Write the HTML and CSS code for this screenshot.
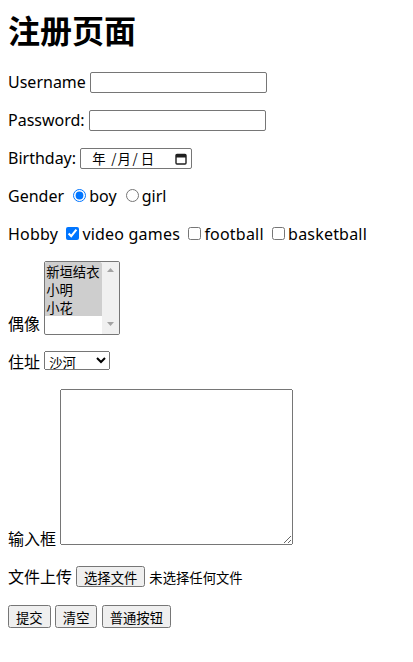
FILE: index.html
```html
<!DOCTYPE html>
<html lang="zh">
<head>
<meta charset="utf-8">
<title>注册页面</title>
<link rel="stylesheet" href="styles.css">
</head>
<body class="page">
<h1 class="title">注册页面</h1>
<form class="form">
  <p class="row">Username <input class="field field-user" type="text"></p>
  <p class="row">Password: <input class="field field-pass" type="password"></p>
  <p class="row">Birthday: <span class="date-input" role="textbox" aria-label="Birthday"><span class="date-seg">年</span><span class="date-sep date-sep-1">/</span><span class="date-seg">月</span><span class="date-sep date-sep-2">/</span><span class="date-seg">日</span><svg class="cal" width="12" height="12" viewBox="0 0 12 12" aria-hidden="true"><rect x="1" y="1.5" width="10" height="9.5" rx="1" fill="none" stroke="#1f1f1f" stroke-width="1.4"/><rect x="1" y="1.5" width="10" height="3" fill="#1f1f1f"/></svg></span></p>
  <p class="row">Gender <input class="radio" type="radio" name="g" checked>boy <input class="radio" type="radio" name="g">girl</p>
  <p class="row row-wide">Hobby <input class="check" type="checkbox" checked>video games <input class="check" type="checkbox">football <input class="check" type="checkbox">basketball</p>
  <p class="row">偶像 <span class="listbox-wrap"><span class="listbox-inner"><select class="listbox" multiple size="4">
    <option selected>新垣结衣</option>
    <option selected>小明</option>
    <option selected>小花</option>
  </select><span class="scrollbar" aria-hidden="true"><svg width="7" height="4" viewBox="0 0 7 4"><path d="M0 4 L3.5 0 L7 4 Z" fill="#a3a3a3"/></svg><svg width="7" height="4" viewBox="0 0 7 4"><path d="M0 0 L3.5 4 L7 0 Z" fill="#a3a3a3"/></svg></span></span></span></p>
  <p class="row">住址 <select class="dropdown">
    <option>沙河</option>
    <option>北京</option>
  </select></p>
  <p class="row">输入框 <textarea class="textarea"></textarea></p>
  <p class="row">文件上传 <button class="btn btn-file" type="button">选择文件</button> <span class="file-note">未选择任何文件</span></p>
  <p class="row"><input class="btn" type="submit" value="提交"> <input class="btn" type="reset" value="清空"> <input class="btn" type="button" value="普通按钮"></p>
</form>
</body>
</html>
```
FILE: styles.css
```css
.page {
  margin: 8px;
  font-family: "Noto Sans", "Noto Sans CJK SC", sans-serif;
  font-size: 16px;
  line-height: 22px;
  color: #000;
  background: #fff;
}
.title {
  margin: 0 0 21px;
  font-size: 32px;
  line-height: 42px;
  font-weight: bold;
  font-family: "Noto Sans CJK SC", sans-serif;
}
.form {
  margin: 0;
}
.row {
  margin: 16px 0;
}
.row-wide {
  letter-spacing: 0.2px;
}
.form input,
.form select,
.form textarea,
.form button {
  font-family: "Noto Sans CJK SC", sans-serif;
  font-size: 13.33px;
}
.field {
  box-sizing: border-box;
  height: 21px;
  border: 1px solid #767676;
  border-radius: 2px;
  padding: 1px 2px;
}
.field-user { width: 177px; }
.field-pass { width: 177px; }

.date-input {
  display: inline-flex;
  align-items: center;
  box-sizing: border-box;
  width: 112px;
  height: 21px;
  padding: 0 4px 0 11px;
  border: 1px solid #767676;
  border-radius: 2px;
  font-family: "Noto Sans CJK SC", sans-serif;
  font-size: 13.33px;
  line-height: 17px;
}
.date-seg { width: 13px; }
.date-sep-1 { margin: 0 1px 0 6px; }
.date-sep-2 { margin: 0 3px 0 2px; }
.cal { margin-left: auto; }

.radio { margin: 3px 3px 0 5px; }
.check { margin: 3px 3px 3px 4px; }

.listbox-wrap {
  display: inline-block;
  box-sizing: border-box;
  width: 76px;
  height: 74px;
  border: 1px solid #767676;
  border-radius: 2px;
  background: #fff;
  overflow: hidden;
  vertical-align: text-bottom;
}
.listbox-inner {
  display: flex;
  height: 72px;
}
.listbox {
  flex: 1;
  min-width: 0;
  height: 72px;
  border: 0;
  padding: 0;
  margin: 0;
  overflow: hidden;
  outline: none;
}
.listbox option {
  height: 18px;
  line-height: 18px;
  padding: 0 1px;
  color: #000;
}
.scrollbar {
  display: flex;
  flex-direction: column;
  justify-content: space-between;
  align-items: center;
  width: 17px;
  padding: 6px 0 8px;
  box-sizing: border-box;
  background: #f0f0f0;
}

.dropdown {
  width: 66px;
  height: 19px;
}
.textarea {
  box-sizing: border-box;
  width: 233px;
  height: 156px;
}
.btn {
  height: 23px;
}
.btn-file {
  height: 21px;
  width: 69px;
  padding: 0 4px;
}
.file-note {
  font-family: "Noto Sans CJK SC", sans-serif;
  font-size: 13.33px;
}
```
